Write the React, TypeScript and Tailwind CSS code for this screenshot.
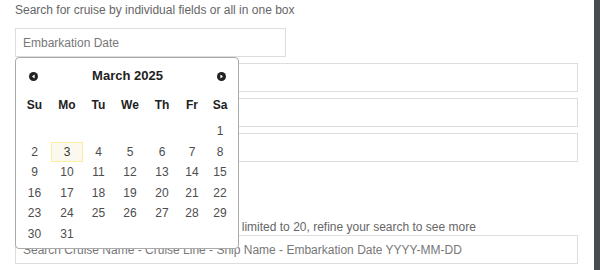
import React from "react";

const days: (number | null)[] = [
    null, null, null, null, null, null, 1,
    2, 3, 4, 5, 6, 7, 8,
    9, 10, 11, 12, 13, 14, 15,
    16, 17, 18, 19, 20, 21, 22,
    23, 24, 25, 26, 27, 28, 29,
    30, 31, null, null, null, null, null,
];

const weekDays = ["Su", "Mo", "Tu", "We", "Th", "Fr", "Sa"];

function Datepicker() {
    return (
        <div className="absolute left-[15px] top-[57px] w-[224px] rounded-[4px] border border-[#aaaaaa] bg-white pl-[2px] pb-[4px]">
            {/* Header */}
            <div className="flex h-[36px] items-center justify-between pl-[11px] pr-[12px]">
                <span className="flex h-[9px] w-[9px] items-center justify-center rounded-full bg-[#222]">
                    <svg width="5" height="5" viewBox="0 0 5 5">
                        <path d="M1 2.5 L3.6 0.6 L3.6 4.4 Z" fill="#fff" />
                    </svg>
                </span>
                <span className="text-[13px] font-bold text-[#222]">March 2025</span>
                <span className="flex h-[9px] w-[9px] items-center justify-center rounded-full bg-[#222]">
                    <svg width="5" height="5" viewBox="0 0 5 5">
                        <path d="M4 2.5 L1.4 0.6 L1.4 4.4 Z" fill="#fff" />
                    </svg>
                </span>
            </div>

            {/* Week days */}
            <div className="grid h-[22px] grid-cols-[33px_32px_31px_32px_32px_28px_28px] items-center">
                {weekDays.map((d) => (
                    <span key={d} className="text-center text-[12px] font-bold text-[#222]">
                        {d}
                    </span>
                ))}
            </div>

            {/* Days */}
            <div className="mt-[5px] grid grid-cols-[33px_32px_31px_32px_32px_28px_28px] auto-rows-[20.5px]">
                {days.map((d, i) => (
                    <div key={i} className="flex items-center justify-center">
                        {d === 3 ? (
                            <span className="flex h-[20px] w-full items-center justify-center border border-[#fcefa1] bg-[#fbf9ee] text-[12px] text-[#363636]">
                                {d}
                            </span>
                        ) : (
                            <span className="text-[12px] text-[#4d4d4d]">{d}</span>
                        )}
                    </div>
                ))}
            </div>
        </div>
    );
}

export default function App() {
    const inputCls =
        "block h-[29px] w-full border border-[#dddddd] bg-white px-[7px] text-[12px] text-[#555] placeholder:text-[#777] outline-none";

    return (
        <div className="flex h-[270px] w-[600px] overflow-hidden bg-white font-['Liberation_Sans',Arial,sans-serif]">
            <div className="relative flex-1 pl-[15px] pr-[16px]">
                <p className="pt-[3px] text-[12px] leading-[15px] text-[#666]">
                    Search for cruise by individual fields or all in one box
                </p>

                <div className="mt-[10px] flex flex-col gap-[6px]">
                    <input className={`${inputCls} !w-[271px]`} placeholder="Embarkation Date" />
                    <input className={inputCls} placeholder="Cruise Name" />
                    <input className={inputCls} placeholder="Cruise Line" />
                    <input className={inputCls} placeholder="Ship Name" />
                </div>

                <p className="mt-[58px] pl-[2px] text-[12px] leading-[15px] text-[#666]">
                    Results from the all in one box search are limited to 20, refine your search to see more
                </p>

                <input
                    className={inputCls}
                    placeholder="Search Cruise Name - Cruise Line - Ship Name - Embarkation Date YYYY-MM-DD"
                />

                <Datepicker />
            </div>
            <div className="w-[6px] bg-[#474c51]" />
        </div>
    );
}
